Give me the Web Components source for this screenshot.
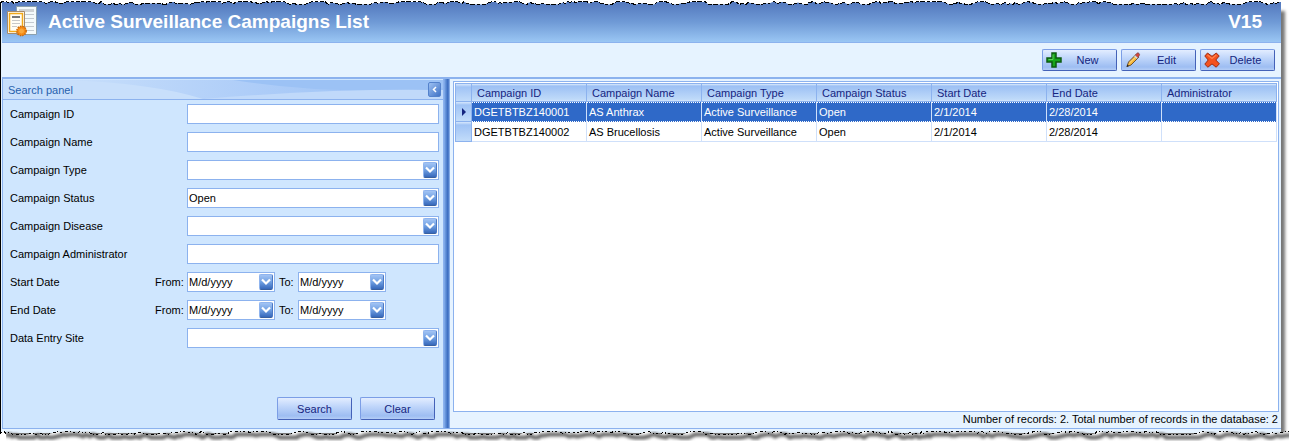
<!DOCTYPE html>
<html lang="en">
<head>
<meta charset="utf-8">
<title>Active Surveillance Campaigns List</title>
<style>
  body { margin: 0; background: #fff; font: 11px/14px "Liberation Sans", Arial, sans-serif; color: #000; }
</style>
</head>
<body>
<campaign-window>
  <title-bar slot="title" version="V15">Active Surveillance Campaigns List</title-bar>
  <tool-bar slot="tools">
    <push-button icon="add">New</push-button>
    <push-button icon="edit">Edit</push-button>
    <push-button icon="delete">Delete</push-button>
  </tool-bar>
  <search-panel slot="search" heading="Search panel">
    <form-field label="Campaign ID"></form-field>
    <form-field label="Campaign Name"></form-field>
    <form-field label="Campaign Type" kind="select"></form-field>
    <form-field label="Campaign Status" kind="select" value="Open"></form-field>
    <form-field label="Campaign Disease" kind="select"></form-field>
    <form-field label="Campaign Administrator"></form-field>
    <date-range label="Start Date"></date-range>
    <date-range label="End Date"></date-range>
    <form-field label="Data Entry Site" kind="select"></form-field>
    <push-button slot="actions">Search</push-button>
    <push-button slot="actions">Clear</push-button>
  </search-panel>
  <campaign-grid slot="grid"></campaign-grid>
</campaign-window>

<script>
const define = (name, render, after) => customElements.define(name, class extends HTMLElement {
  connectedCallback() {
    if (this.shadowRoot) return;
    const t = document.createElement('template');
    t.innerHTML = render(this);
    this.attachShadow({ mode: 'open' }).append(t.content.cloneNode(true));
    if (after) after(this);
  }
});

/* Ragged paper edge along the top or the bottom of the window */
define('torn-edge', el => `
<style>
  :host { display: block; height: 12px; overflow: hidden; pointer-events: none; }
  svg { display: block; }
</style>
<svg width="2600" height="12" aria-hidden="true">
  <defs><filter id="b" x="0" y="-100%" width="100%" height="300%"><feGaussianBlur stdDeviation="1.500"/></filter></defs>
  <path class="paper" fill="#fff"/>
  <path class="shade" fill="none" stroke="#666" stroke-width="4"/>
  <path class="line" fill="none" stroke="#000" stroke-dasharray="${el.getAttribute('side') === 'bottom' ? '2 3 3 2 1 2' : '5 2 3 2 4 1'}" shape-rendering="crispEdges"/>
</svg>`, el => {
  const bottom = el.getAttribute('side') === 'bottom';
  let seed = bottom ? 77 : 31;
  const rnd = () => (seed = (seed * 16807) % 2147483647) / 2147483647;
  let d = '', x = 0, y = 3;
  while (x < 2600) {
    d += (d ? 'L' : 'M') + x + ' ' + (y + .5);
    x += 2 + Math.floor(rnd() * 4);
    y = Math.max(1, Math.min(4, y + Math.floor(rnd() * 5) - 2));
  }
  const q = s => el.shadowRoot.querySelector(s);
  q('.line').setAttribute('d', d);
  if (bottom) {
    q('.paper').setAttribute('d', d + 'L2600 12L0 12Z');
    q('.shade').setAttribute('d', d);
    q('.shade').setAttribute('transform', 'translate(6 3)');
    q('.shade').setAttribute('filter', 'url(#b)');
  } else {
    q('.paper').setAttribute('d', d + 'L2600 0L0 0Z');
  }
});

define('campaign-window', () => `
<style>
  :host { display: flex; flex-direction: column; box-sizing: border-box; min-height: 100vh; position: relative; padding: 2px 8px 9px 0; }
  .frame { flex: 1; display: flex; flex-direction: column; border-left: 1px solid #000; padding: 0 0 4px 1px; background: #e6f3ff; box-shadow: 5px 8px 3px -1px #777; min-width: 0; }
  .work { flex: 1; display: flex; border-bottom: 1px solid #8cb2ee; border-top: 2px solid #8cb2ee; border-left: 1px solid #8cb2ee; }
  .splitter { width: 7px; background: linear-gradient(90deg, #8cb2ee 0 1px, #6f9de0 2px, #3768bd 5px, #9cc0f4); }
  .result { flex: 1; min-width: 0; display: flex; }
  torn-edge { position: absolute; left: 0; right: 8px; }
  torn-edge.top { top: 0; }
  torn-edge.bottom { bottom: 0; right: 0; }
</style>
<div class="frame">
  <slot name="title"></slot>
  <slot name="tools"></slot>
  <div class="work">
    <slot name="search"></slot>
    <div class="splitter" role="separator" aria-orientation="vertical"></div>
    <div class="result"><slot name="grid"></slot></div>
  </div>
</div>
<torn-edge class="top" side="top"></torn-edge>
<torn-edge class="bottom" side="bottom"></torn-edge>`);

define('title-bar', el => `
<style>
  :host { display: flex; align-items: center; height: 40px; padding: 0 19px 0 5px; background: linear-gradient(#5378bd, #6f9ad6 50%, #9ac6f4); color: #fff; border-bottom: 1px solid #8cb2ee; }
  h1, b { font: bold 19px/24px "Liberation Sans", Arial, sans-serif; margin: 0; }
  h1 { flex: 1; margin-left: 10px; }
</style>
<svg width="31" height="32" viewBox="0 0 31 32" aria-hidden="true">
  <path d="M9.500 .5h20v28h-20z" fill="#f4fafb" stroke="#8aa0ae"/>
  <path d="M12 3h15v3H12z" fill="#cfd3d5"/>
  <path d="M18 8.500h9M18 12.500h9M18 16.500h9M18 20.500h9M18 24.500h9" stroke="#c3cad0"/>
  <path d="M.5 5.500h17v22H.5z" fill="#fff" stroke="#a58a6a"/>
  <path d="M2.500 7.500h13v18h-13z" fill="#fffdf5" stroke="#f0a818" stroke-width="1.500"/>
  <path d="M5 11h8" stroke="#777" stroke-width="2"/>
  <path d="M5 14.500h8M5 17.500h8M5 20.500h5" stroke="#c8c8c8"/>
  <circle cx="14.500" cy="25" r="4.700" fill="#f68a12" stroke="#c9690c" stroke-width="1.500" stroke-dasharray="1.500 1"/>
  <circle cx="14.500" cy="25" r="3" fill="#fba83a" stroke="#f68a12"/>
</svg>
<h1><slot></slot></h1><b>${el.getAttribute('version')}</b>`);

define('tool-bar', () => `
<style>
  :host { display: flex; justify-content: flex-end; align-items: center; gap: 4px; height: 34px; padding-right: 6px; }
</style><slot></slot>`);

const icons = {
  add: '<path d="M6 1h4v5h5v4h-5v5H6v-5H1V6h5z" fill="#16a51b" stroke="#0c5a12" stroke-width="1.500"/><path d="M7 2.500v5H2.500" fill="none" stroke="#5fd05a"/>',
  edit: '<path d="M2 14.500l1.500-4.500L11 2.500l2.800 2.700L6 13z" fill="#f6b73c" stroke="#6b5136"/><path d="M4.500 11L12 3.800" stroke="#ffe08a"/><path d="M10 3.300L12 1.200q1 -.8 2 .2t.3 2L12.700 5.800z" fill="#d7443b" stroke="#7b4a4a" stroke-width=".8"/><path d="M9.600 3.700l2.700 2.600" stroke="#cfd8e0" stroke-width="1.500"/><path d="M1.500 15l1-2.500 1.500 1.500z" fill="#222"/>',
  delete: '<path d="M3.500 1L8 4.300 12.300 1 15.200 4 11.800 8l3.600 3.800-3.200 3.400L8 11.900 3.900 15.200 .8 12.200 4.200 8 .8 4z" fill="#f4511e" stroke="#9c2c14"/><path d="M3.500 3L8 6.500l4.300-3.500" fill="none" stroke="#ff8450" stroke-width="1.200"/>'
};
define('push-button', el => {
  const icon = el.getAttribute('icon');
  return `
<style>
  :host { display: block; }
  button { display: flex; align-items: center; box-sizing: border-box; width: 75px; height: ${icon ? 22 : 23}px; margin: 0; padding: 0 3px; font: inherit; color: #15257f; border: 1px solid; border-color: #7c9ee6 #4462b8 #4462b8 #7c9ee6; border-radius: 2px; background: linear-gradient(#e3edff, #c4d9fb 35%, #9dbdf2 85%, #b4cdf6); }
  span { flex: 1; text-align: center; }
  svg { flex: none; }
</style>
<button type="button">${icon ? `<svg width="16" height="16" viewBox="0 0 16 16" aria-hidden="true">${icons[icon]}</svg>` : ''}<span><slot></slot></span></button>`;
});

define('search-panel', el => `
<style>
  :host { display: flex; flex-direction: column; flex: none; width: 440px; background: #cfe6fe; padding-top: 1px; }
  header { display: flex; align-items: center; justify-content: space-between; height: 19px; padding: 0 2px 0 5px; color: #2761ad; border-bottom: 1px solid #8cb2ee; position: relative; overflow: hidden; background: #c8dffb; }
  header .wave { position: absolute; inset: 0; width: 100%; height: 100%; }
  h2 { font: inherit; margin: 0; position: relative; }
  header button { position: relative; display: block; width: 13px; height: 15px; padding: 0; border: 1px solid #5482cc; border-radius: 2px; background: linear-gradient(135deg, #9cc0f2, #4173c6); }
  header button svg { display: block; margin: auto; }
  form { display: flex; flex-direction: column; gap: 8px; padding: 4px 4px 0 7px; flex: 1; }
  .actions { display: flex; justify-content: flex-end; gap: 8px; padding: 0 8px 8px; }
</style>
<header>
  <svg class="wave" viewBox="0 0 440 19" preserveAspectRatio="none" aria-hidden="true">
    <defs><linearGradient id="w"><stop offset="0" stop-color="#c8dffb"/><stop offset=".5" stop-color="#aecdf8"/><stop offset="1" stop-color="#98bff4"/></linearGradient></defs>
    <path d="M60 0Q150 3 200 19H440V0z" fill="url(#w)"/>
    <path d="M230 0Q330 16 440 8V0z" fill="#9cc2f5"/>
    <path d="M200 19Q330 8 440 10V19z" fill="#c0d9fa"/>
  </svg>
  <h2>${el.getAttribute('heading')}</h2>
  <button type="button" aria-label="Collapse search panel"><svg width="7" height="7" viewBox="0 0 7 7"><path d="M5 1L2.500 3.500 5 6" fill="none" stroke="#fff" stroke-width="1.500"/></svg></button>
</header>
<form><slot></slot></form>
<div class="actions"><slot name="actions"></slot></div>`);

const fieldCss = `
  :host { display: flex; align-items: center; height: 20px; }
  .name { flex: 1; }
  .box { position: relative; display: flex; box-sizing: border-box; height: 20px; border: 1px solid #8cb2ee; background: #fff; }
  input, select { appearance: none; flex: 1; min-width: 0; width: 100%; box-sizing: border-box; margin: 0; padding: 0 1px; border: 0; border-radius: 0; outline: 0; background: none; font: inherit; color: #000; }
  .arrow { display: flex; align-items: center; justify-content: center; flex: none; box-sizing: border-box; width: 14px; height: 16px; margin: 1px; padding: 0; border: 1px solid; border-color: #8fb4ee #4c79c4 #39609f #8fb4ee; border-radius: 2px; background: linear-gradient(#a3c4f4, #6f9fe2 50%, #3768ba); }
  .arrow svg { display: block; flex: none; }
  select + .arrow { position: absolute; right: 0; top: 0; pointer-events: none; }`;
const chevron = '<svg width="10" height="8" viewBox="0 0 10 8" aria-hidden="true"><path d="M1 1.500L5 5.500 9 1.500" fill="none" stroke="#fff" stroke-width="2.200"/></svg>';

define('form-field', el => {
  const v = el.getAttribute('value') || '';
  const control = el.getAttribute('kind') === 'select'
    ? `<select id="c"><option>${v}</option></select><span class="arrow">${chevron}</span>`
    : `<input id="c" type="text" value="${v}">`;
  return `<style>${fieldCss} .box { width: 252px; }</style>
<label class="name" for="c">${el.getAttribute('label')}</label><div class="box">${control}</div>`;
});

define('date-range', el => {
  const box = (id, text) => `<label for="${id}">${text}</label><div class="box"><input id="${id}" type="text" value="M/d/yyyy"><button type="button" class="arrow" aria-label="Open calendar">${chevron}</button></div>`;
  return `<style>${fieldCss} .dates { display: grid; grid-template-columns: 32px 88px 23px 88px; align-items: center; width: 284px; } .box + label { padding-left: 4px; }</style>
<span class="name">${el.getAttribute('label')}</span><div class="dates">${box('from', 'From:')}${box('to', 'To:')}</div>`;
});

const columns = ['Campaign ID', 'Campaign Name', 'Campaign Type', 'Campaign Status', 'Start Date', 'End Date', 'Administrator'];
const rows = [
  ['DGETBTBZ140001', 'AS Anthrax', 'Active Surveillance', 'Open', '2/1/2014', '2/28/2014', ''],
  ['DGETBTBZ140002', 'AS Brucellosis', 'Active Surveillance', 'Open', '2/1/2014', '2/28/2014', '']
];
define('campaign-grid', () => `
<style>
  :host { flex: 1; min-width: 0; display: flex; flex-direction: column; padding: 2px 2px 0 3px; }
  .pane { flex: 1; border: 1px solid #8cb2ee; background: #fff; padding: 1px; }
  table { width: 100%; table-layout: fixed; border-collapse: separate; border-spacing: 0; border-left: 1px solid #8cb2ee; }
  th, td { box-sizing: border-box; padding: 0 2px; text-align: left; font-weight: normal; white-space: nowrap; overflow: hidden; height: 20px; }
  thead th { height: 19px; padding: 0 5px; color: #15257f; background: linear-gradient(#dcebfd, #9cc0f4 2px, #bfdaf9 90%, #d2e5fc); border-right: 1px solid #8cb2ee; border-top: 1px solid #8cb2ee; border-bottom: 1px solid #8cb2ee; }
  .mark { width: 16px; padding: 0; background: linear-gradient(#d6e7fd, #a0c3f5 3px, #c2dcfa); border-right: 1px solid #8cb2ee; border-bottom: 1px solid #8cb2ee; }
  td { border-right: 1px solid #cfe0fa; border-bottom: 1px solid #cfe0fa; }
  .sel td { color: #fff; background: #2f69c8; border-top: 1px dotted #fff; border-bottom: 1px dotted #fff; }
  .mark svg { display: block; margin: auto; }
  p { margin: 0; height: 16px; line-height: 14px; text-align: right; padding-right: 1px; }
</style>
<div class="pane"><table>
<thead><tr><th class="mark"></th>${columns.map(c => `<th scope="col">${c}</th>`).join('')}</tr></thead>
<tbody>${rows.map((r, i) => `<tr class="${i ? '' : 'sel'}"><th class="mark">${i ? '' : '<svg width="4" height="8" viewBox="0 0 4 8"><path d="M0 0l4 4-4 4z" fill="#15257f"/></svg>'}</th>${r.map(c => `<td>${c}</td>`).join('')}</tr>`).join('')}</tbody>
</table></div>
<p>Number of records: 2. Total number of records in the database: 2</p>`);
</script>
</body>
</html>
